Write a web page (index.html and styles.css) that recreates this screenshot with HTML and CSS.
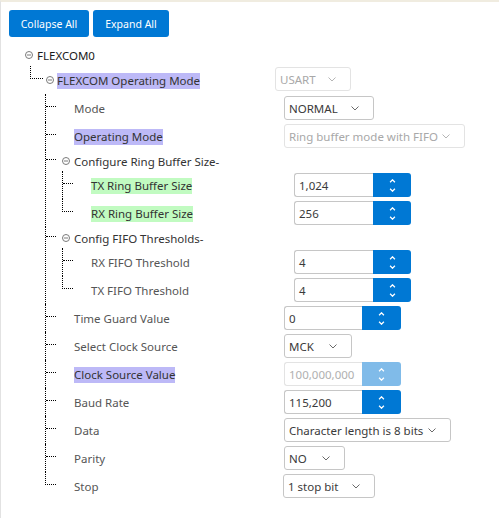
FILE: index.html
```html
<!DOCTYPE html>
<html lang="en">
<head>
<meta charset="utf-8">
<title>FLEXCOM tree</title>
<link rel="stylesheet" href="styles.css">
</head>
<body>
<div class="panel">
  <div class="toolbar">
    <button class="btn btn-collapse">Collapse All</button>
    <button class="btn btn-expand">Expand All</button>
  </div>
  <ul class="tree">
    <li>
      <div class="row row-root">
        <svg class="tog" viewBox="0 0 8 8"><circle cx="4" cy="4" r="3.5"/><line x1="2" y1="4" x2="6" y2="4"/></svg>
        <span class="label-root">FLEXCOM0</span>
      </div>
      <ul class="kids k1">
        <li class="last">
          <div class="row r1">
            <span class="conn"></span>
            <svg class="tog" viewBox="0 0 8 8"><circle cx="4" cy="4" r="3.5"/><line x1="2" y1="4" x2="6" y2="4"/></svg>
            <span class="label"><span class="txt hl-purple dark">FLEXCOM Operating Mode</span></span>
            <div class="select disabled s-usart"><span>USART</span><svg class="chev" viewBox="0 0 8 5"><polyline points="0.5,0.5 4,4 7.5,0.5"/></svg></div>
          </div>
          <ul class="kids k2">
            <li>
              <div class="row r2 leaf">
                <span class="conn"></span>
                <span class="label"><span class="txt">Mode</span></span>
                <div class="select s-normal"><span>NORMAL</span><svg class="chev" viewBox="0 0 8 5"><polyline points="0.5,0.5 4,4 7.5,0.5"/></svg></div>
              </div>
            </li>
            <li>
              <div class="row r2 leaf">
                <span class="conn"></span>
                <span class="label"><span class="txt hl-purple dark">Operating Mode</span></span>
                <div class="select disabled s-ring"><span>Ring buffer mode with FIFO</span><svg class="chev" viewBox="0 0 8 5"><polyline points="0.5,0.5 4,4 7.5,0.5"/></svg></div>
              </div>
            </li>
            <li>
              <div class="row r2 head">
                <span class="conn"></span>
                <svg class="tog" viewBox="0 0 8 8"><circle cx="4" cy="4" r="3.5"/><line x1="2" y1="4" x2="6" y2="4"/></svg>
                <span class="txt dark">Configure Ring Buffer Size-</span>
              </div>
              <ul class="kids k3">
                <li>
                  <div class="row r3 leaf">
                    <span class="conn"></span>
                    <span class="label"><span class="txt hl-green dark">TX Ring Buffer Size</span></span>
                    <div class="spin"><span class="field">1,024</span><span class="spin-btn"><svg viewBox="0 0 8 5"><polyline points="1,4 4,1 7,4"/></svg><svg viewBox="0 0 8 5"><polyline points="1,1 4,4 7,1"/></svg></span></div>
                  </div>
                </li>
                <li class="last">
                  <div class="row r3 leaf">
                    <span class="conn"></span>
                    <span class="label"><span class="txt hl-green dark">RX Ring Buffer Size</span></span>
                    <div class="spin"><span class="field">256</span><span class="spin-btn"><svg viewBox="0 0 8 5"><polyline points="1,4 4,1 7,4"/></svg><svg viewBox="0 0 8 5"><polyline points="1,1 4,4 7,1"/></svg></span></div>
                  </div>
                </li>
              </ul>
            </li>
            <li>
              <div class="row r2 head">
                <span class="conn"></span>
                <svg class="tog" viewBox="0 0 8 8"><circle cx="4" cy="4" r="3.5"/><line x1="2" y1="4" x2="6" y2="4"/></svg>
                <span class="txt dark">Config FIFO Thresholds-</span>
              </div>
              <ul class="kids k3">
                <li>
                  <div class="row r3 leaf">
                    <span class="conn"></span>
                    <span class="label"><span class="txt">RX FIFO Threshold</span></span>
                    <div class="spin"><span class="field">4</span><span class="spin-btn"><svg viewBox="0 0 8 5"><polyline points="1,4 4,1 7,4"/></svg><svg viewBox="0 0 8 5"><polyline points="1,1 4,4 7,1"/></svg></span></div>
                  </div>
                </li>
                <li class="last">
                  <div class="row r3 leaf">
                    <span class="conn"></span>
                    <span class="label"><span class="txt">TX FIFO Threshold</span></span>
                    <div class="spin"><span class="field">4</span><span class="spin-btn"><svg viewBox="0 0 8 5"><polyline points="1,4 4,1 7,4"/></svg><svg viewBox="0 0 8 5"><polyline points="1,1 4,4 7,1"/></svg></span></div>
                  </div>
                </li>
              </ul>
            </li>
            <li>
              <div class="row r2 leaf">
                <span class="conn"></span>
                <span class="label"><span class="txt">Time Guard Value</span></span>
                <div class="spin spin-short"><span class="field">0</span><span class="spin-btn"><svg viewBox="0 0 8 5"><polyline points="1,4 4,1 7,4"/></svg><svg viewBox="0 0 8 5"><polyline points="1,1 4,4 7,1"/></svg></span></div>
              </div>
            </li>
            <li>
              <div class="row r2 leaf">
                <span class="conn"></span>
                <span class="label"><span class="txt">Select Clock Source</span></span>
                <div class="select s-mck"><span>MCK</span><svg class="chev" viewBox="0 0 8 5"><polyline points="0.5,0.5 4,4 7.5,0.5"/></svg></div>
              </div>
            </li>
            <li>
              <div class="row r2 leaf">
                <span class="conn"></span>
                <span class="label"><span class="txt hl-purple dark">Clock Source Value</span></span>
                <div class="spin spin-short disabled"><span class="field">100,000,000</span><span class="spin-btn"><svg viewBox="0 0 8 5"><polyline points="1,4 4,1 7,4"/></svg><svg viewBox="0 0 8 5"><polyline points="1,1 4,4 7,1"/></svg></span></div>
              </div>
            </li>
            <li>
              <div class="row r2 leaf">
                <span class="conn"></span>
                <span class="label"><span class="txt">Baud Rate</span></span>
                <div class="spin spin-short"><span class="field">115,200</span><span class="spin-btn"><svg viewBox="0 0 8 5"><polyline points="1,4 4,1 7,4"/></svg><svg viewBox="0 0 8 5"><polyline points="1,1 4,4 7,1"/></svg></span></div>
              </div>
            </li>
            <li>
              <div class="row r2 leaf">
                <span class="conn"></span>
                <span class="label"><span class="txt">Data</span></span>
                <div class="select s-data"><span>Character length is 8 bits</span><svg class="chev" viewBox="0 0 8 5"><polyline points="0.5,0.5 4,4 7.5,0.5"/></svg></div>
              </div>
            </li>
            <li>
              <div class="row r2 leaf">
                <span class="conn"></span>
                <span class="label"><span class="txt">Parity</span></span>
                <div class="select s-parity"><span>NO</span><svg class="chev" viewBox="0 0 8 5"><polyline points="0.5,0.5 4,4 7.5,0.5"/></svg></div>
              </div>
            </li>
            <li class="last">
              <div class="row r2 leaf">
                <span class="conn"></span>
                <span class="label label-stop"><span class="txt">Stop</span></span>
                <div class="select s-stop"><span>1 stop bit</span><svg class="chev" viewBox="0 0 8 5"><polyline points="0.5,0.5 4,4 7.5,0.5"/></svg></div>
              </div>
            </li>
          </ul>
        </li>
      </ul>
    </li>
  </ul>
</div>
</body>
</html>
```
FILE: styles.css
```css
* { box-sizing: border-box; }

html, body {
  margin: 0;
  background: #ffffff;
}

body {
  font-family: "Noto Sans", "Open Sans", sans-serif;
  font-size: 11.5px;
  color: #333;
}

.panel {
  min-height: 518px;
  border-top: 2px solid #f0ece0;
  border-left: 1px solid #e2e2e2;
  padding: 8px 0 0 8px;
}

.toolbar {
  display: flex;
  gap: 4px;
}

.btn {
  height: 27px;
  border: none;
  border-radius: 3px;
  background: #0078d4;
  color: #fff;
  font-family: inherit;
  font-size: 10.5px;
  padding: 0;
  text-align: center;
}
.btn-collapse { width: 80px; }
.btn-expand { width: 76px; }

ul {
  list-style: none;
  margin: 0;
  padding: 0;
}

.tree {
  margin-top: 7px;
  padding-left: 16px;
}

.row {
  display: flex;
  align-items: center;
  height: 28px;
}

.row-root { height: 22px; }
.row.head { height: 21px; }

.tog {
  flex: none;
  width: 8px;
  height: 8px;
  fill: none;
  stroke: #7a7a7a;
  stroke-width: 1;
}

.label-root {
  margin-left: 4px;
  color: #1a1a1a;
}

.kids > li { border-left: 1px dotted #000; }
.kids > li.last { border-left: none; }

.conn {
  flex: none;
  align-self: flex-start;
  width: 10px;
  height: calc(50% - 1px);
  border-bottom: 1px dotted #000;
}

.kids > li.last > .row > .conn {
  width: 11px;
  border-left: 1px dotted #000;
}

.k1 { margin-left: 5px; }
.k2 { margin-left: 15px; }
.k3 { margin-left: 16px; }

.r1 > .conn, .kids > li.last > .r1 > .conn { width: 13px; }
.r1 > .tog { margin: 0 3px; }
.r1 > .label { width: 218px; }

.r2.head > .tog { margin: 0 4px 0 6px; }
.r2.leaf > .label { margin-left: 18px; width: 210px; }
.r3.leaf > .label { margin-left: 18px; width: 203px; }
.r2.leaf > .label-stop { width: 209px; }

.label {
  flex: none;
  display: flex;
  margin-top: 2px;
}

.txt {
  line-height: 16px;
  color: #555;
  white-space: nowrap;
}
.head > .txt { margin-top: 2px; }

.txt.dark { color: #333; }
.hl-purple { background: #bdb9f7; }
.hl-green { background: #c1fbc1; }

.select {
  flex: none;
  display: flex;
  align-items: center;
  justify-content: space-between;
  height: 24px;
  padding: 0 14px 0 4px;
  border: 1px solid #c6c6c6;
  border-radius: 3px;
  background: #fff;
  color: #3a3a3a;
  white-space: nowrap;
}

.select.disabled {
  border-color: #e3e3e3;
  color: #a8a8a8;
}

.chev {
  flex: none;
  width: 8px;
  height: 5px;
  fill: none;
  stroke: #6a6a6a;
  stroke-width: 1;
}
.select.disabled .chev { stroke: #b5b5b5; }

.s-usart { width: 76px; margin-top: -2px; }
.s-normal { width: 90px; }
.s-ring { width: 181px; }
.s-mck { width: 68px; }
.s-data { width: 167px; }
.s-parity { width: 61px; }
.s-stop { width: 92px; }

.spin {
  flex: none;
  display: flex;
  height: 24px;
}

.field {
  width: 79px;
  height: 24px;
  display: flex;
  align-items: center;
  padding-left: 4px;
  border: 1px solid #c6c6c6;
  border-right: none;
  border-radius: 3px 0 0 3px;
  color: #3a3a3a;
}

.spin-btn {
  width: 38px;
  height: 24px;
  display: flex;
  flex-direction: column;
  align-items: center;
  justify-content: center;
  gap: 5px;
  background: #0078d4;
  border-radius: 0 3px 3px 0;
}

.spin-btn svg {
  width: 7px;
  height: 4px;
  fill: none;
  stroke: #fff;
  stroke-width: 1.6;
}

.spin-short .field { width: 78px; }
.spin-short .spin-btn { width: 39px; }

.spin.disabled .field {
  border-color: #e3e3e3;
  color: #b0b0b0;
}
.spin.disabled .spin-btn { background: #80bbe9; }
```
